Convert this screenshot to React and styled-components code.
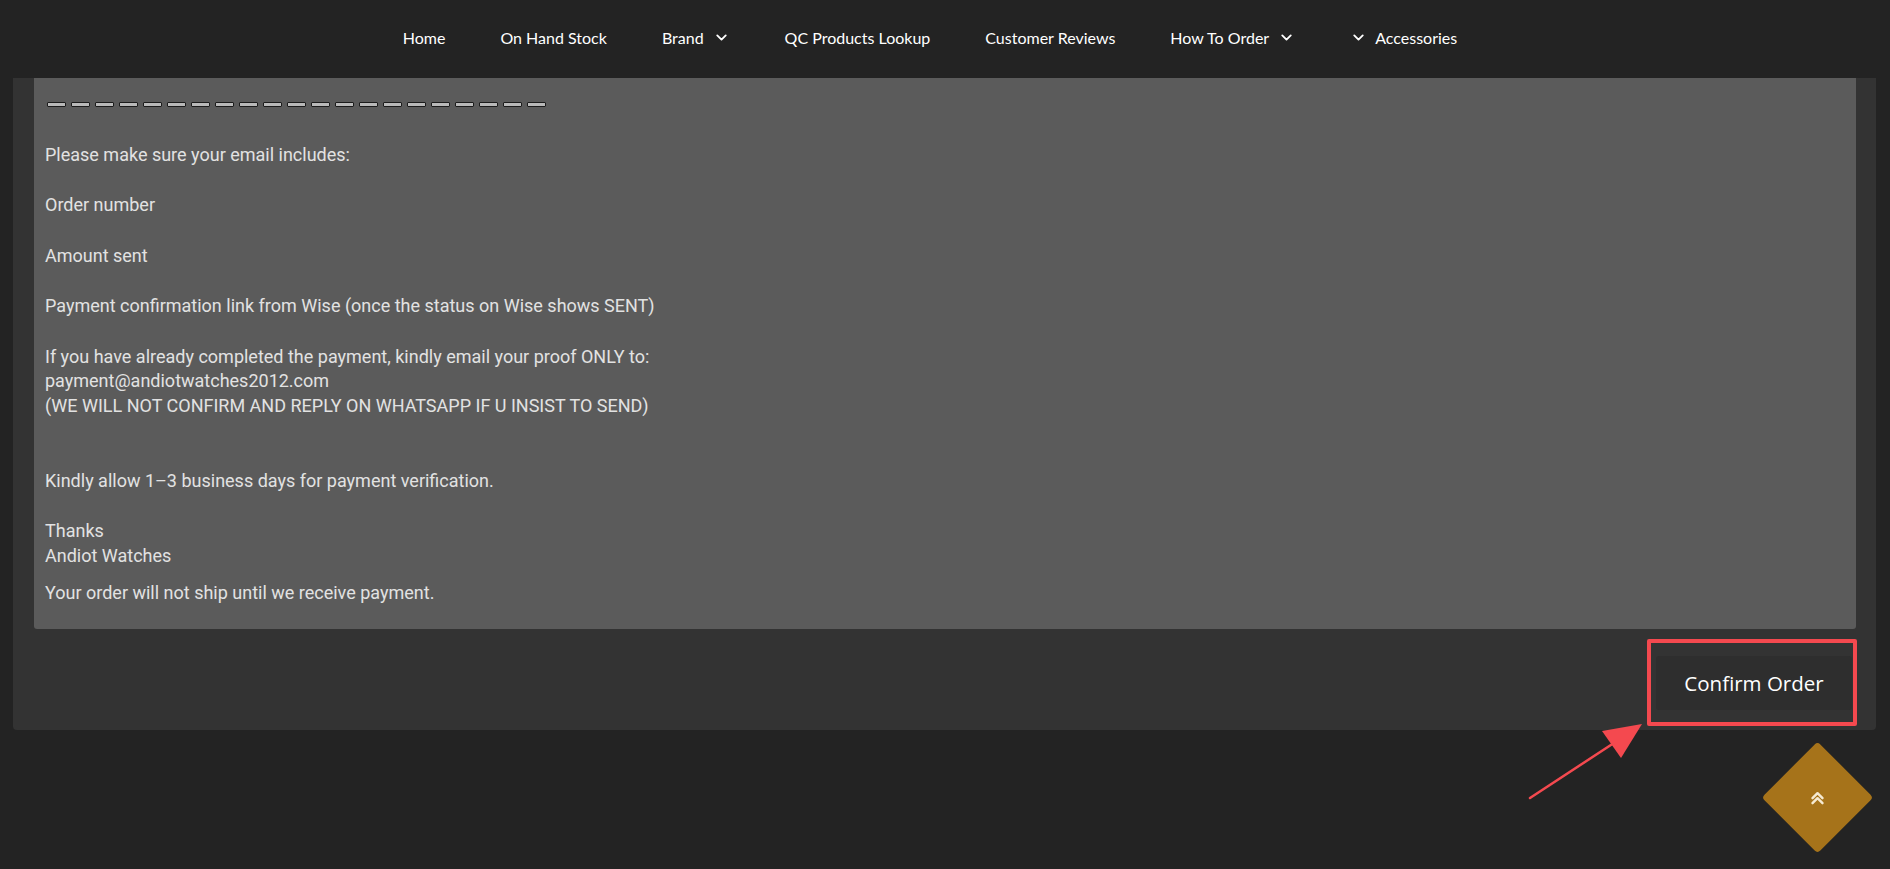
import React from 'react';
import styled, { createGlobalStyle } from 'styled-components';
import { FiChevronDown } from 'react-icons/fi';

const GlobalStyle = createGlobalStyle`
  html, body {
    margin: 0;
    padding: 0;
    background: #232323;
    height: 100%;
    overflow: hidden;
  }
  * {
    box-sizing: border-box;
  }
`;

const Page = styled.div`
  min-height: 869px;
  background: #232323;
  position: relative;
`;

const Header = styled.header`
  height: 78px;
  background: #232323;
  display: flex;
  align-items: center;
  justify-content: center;
  padding: 0 30px 4px 0;
`;

const NavList = styled.ul`
  list-style: none;
  display: flex;
  align-items: center;
  margin: 0;
  padding: 0;
  gap: 55px;
`;

const NavItem = styled.li`
  display: flex;
  align-items: center;
  gap: ${(p) => (p.$lead ? '8px' : '9px')};
  color: #ffffff;
  font-family: Lato, 'Open Sans', sans-serif;
  font-size: 16px;
  cursor: pointer;
  svg {
    width: 17px;
    height: 17px;
    stroke-width: 2.6;
  }
`;

const Card = styled.section`
  margin: 0 14px 0 13px;
  background: #333333;
  border-radius: 0 0 4px 4px;
  padding: 0 20px 20px 21px;
`;

const Notice = styled.div`
  background: #5b5b5b;
  border-radius: 0 0 3px 3px;
  padding: 14px 11px 24px;
  color: #e2e2e2;
  font-family: Roboto, 'Noto Sans', sans-serif;
  font-size: 18px;
  line-height: 24.5px;
`;

const Para = styled.p`
  margin: 0 0 ${(p) => (p.$tight ? '12.5px' : p.$last ? '0' : '26px')};
`;

const DashRow = styled.div`
  display: flex;
  gap: 5px;
  height: 24.5px;
  align-items: center;
  margin: 0 0 26px 2px;
`;

const Dash = styled.span`
  display: block;
  width: 19px;
  height: 5px;
  background: #b9b9b9;
  border: 1px solid #1c1c1c;
  border-radius: 1px;
`;

const Actions = styled.div`
  display: flex;
  justify-content: flex-end;
  padding: 27px 0 0;
  margin-right: 4px;
  position: relative;
`;

const ConfirmButton = styled.button`
  width: 196px;
  height: 54px;
  background: #2e2e2e;
  border: none;
  border-radius: 3px;
  color: #ffffff;
  font-family: 'Open Sans', 'Noto Sans', sans-serif;
  font-size: 20.5px;
  cursor: pointer;
`;

const Highlight = styled.div`
  position: absolute;
  right: -5px;
  top: 10px;
  width: 210px;
  height: 87px;
  border: 4px solid #f4494f;
  border-radius: 2px;
  pointer-events: none;
`;

const Annotation = styled.svg`
  position: absolute;
  left: 1520px;
  top: 710px;
  width: 140px;
  height: 100px;
  pointer-events: none;
`;

const ScrollTop = styled.button`
  position: absolute;
  left: 1778px;
  top: 758px;
  width: 79px;
  height: 79px;
  background: #a6731a;
  border: none;
  border-radius: 4px;
  transform: rotate(45deg);
  display: flex;
  align-items: center;
  justify-content: center;
  cursor: pointer;
  svg {
    transform: rotate(-45deg);
  }
`;

const navItems = [
  { label: 'Home' },
  { label: 'On Hand Stock' },
  { label: 'Brand', after: true },
  { label: 'QC Products Lookup' },
  { label: 'Customer Reviews' },
  { label: 'How To Order', after: true },
  { label: 'Accessories', before: true },
];

export default function App() {
  return (
    <Page>
      <GlobalStyle />
      <Header>
        <NavList>
          {navItems.map((item) => (
            <NavItem key={item.label} $lead={item.before}>
              {item.before && <FiChevronDown />}
              {item.label}
              {item.after && <FiChevronDown />}
            </NavItem>
          ))}
        </NavList>
      </Header>

      <Card>
        <Notice>
          <DashRow>
            {Array.from({ length: 21 }).map((_, i) => (
              <Dash key={i} />
            ))}
          </DashRow>
          <Para>Please make sure your email includes:</Para>
          <Para>Order number</Para>
          <Para>Amount sent</Para>
          <Para>Payment confirmation link from Wise (once the status on Wise shows SENT)</Para>
          <Para>
            If you have already completed the payment, kindly email your proof ONLY to:
            <br />
            payment@andiotwatches2012.com
            <br />
            (WE WILL NOT CONFIRM AND REPLY ON WHATSAPP IF U INSIST TO SEND)
            <br />
            <br />
          </Para>
          <Para>Kindly allow 1–3 business days for payment verification.</Para>
          <Para $tight>
            Thanks
            <br />
            Andiot Watches
          </Para>
          <Para $last>Your order will not ship until we receive payment.</Para>
        </Notice>
        <Actions>
          <ConfirmButton>Confirm Order</ConfirmButton>
          <Highlight />
        </Actions>
      </Card>

      <Annotation viewBox="0 0 140 100">
        <line x1="10" y1="88" x2="100" y2="29" stroke="#f4494f" strokeWidth="2.5" strokeLinecap="round" />
        <polygon points="122,14 82,21 101,48" fill="#f4494f" />
      </Annotation>

      <ScrollTop aria-label="Back to top">
        <svg width="14" height="14" viewBox="0 0 14 14" fill="none" stroke="#f6ead2" strokeWidth="2.4" strokeLinecap="round" strokeLinejoin="round">
          <polyline points="2,7 7,2 12,7" />
          <polyline points="2,12 7,7 12,12" />
        </svg>
      </ScrollTop>
    </Page>
  );
}
